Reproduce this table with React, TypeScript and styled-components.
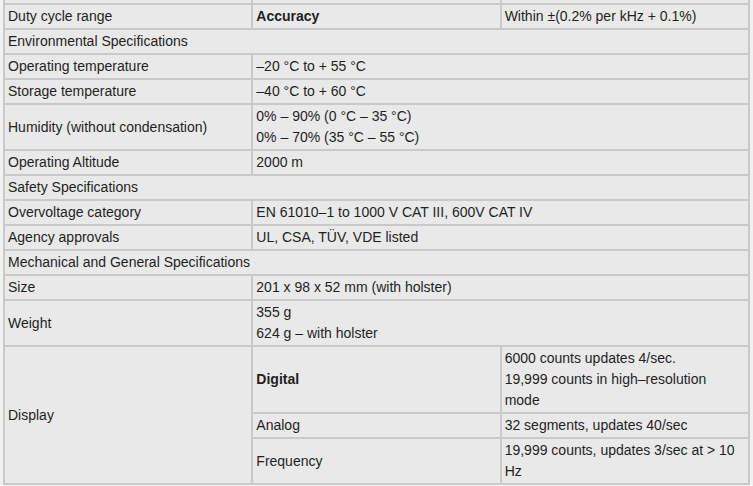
import React from "react";
import styled, { createGlobalStyle } from "styled-components";

const GlobalStyle = createGlobalStyle`
  html, body {
    margin: 0;
    padding: 0;
    background: #f1f1f1;
  }
`;

const Viewport = styled.div`
  height: 486px;
  overflow: hidden;
  padding: 0 3px;
`;

// the page is scrolled: only the bottom edge of the row above "Duty cycle range" shows
const SpecTable = styled.table`
  width: 100%;
  margin-top: -22px;
  border: 1px solid #c9c9c9;
  border-collapse: separate;
  border-spacing: 0;
  table-layout: fixed;
  font-family: "Liberation Sans", Arial, sans-serif;
  font-size: 14px;
  line-height: 21px;
  color: #1f1f1f;
`;

interface ICell {
  $bold?: boolean;
}
const Cell = styled.td<ICell>`
  border: 1px solid #c9c9c9;
  background: #e9e9e9;
  padding: 1px 3px;
  vertical-align: middle;
  font-weight: ${({ $bold }) => ($bold ? "bold" : "normal")};
`;

const Col = styled.col`
  width: 33.333%;
`;

interface ISpec {
  label: string;
  value: React.ReactNode;
}

const SpecRow: React.FC<ISpec> = ({ label, value }) => (
  <tr>
    <Cell>{label}</Cell>
    <Cell colSpan={2}>{value}</Cell>
  </tr>
);

const SectionRow: React.FC<{ title: string }> = ({ title }) => (
  <tr>
    <Cell colSpan={3}>{title}</Cell>
  </tr>
);

export default function App() {
  return (
    <>
      <GlobalStyle />
      <Viewport>
        <SpecTable>
          <colgroup>
            <Col />
            <Col />
            <Col />
          </colgroup>
          <tbody>
            <tr>
              <Cell>{"\u00a0"}</Cell>
              <Cell>{"\u00a0"}</Cell>
              <Cell>{"\u00a0"}</Cell>
            </tr>
            <tr>
              <Cell>Duty cycle range</Cell>
              <Cell $bold>Accuracy</Cell>
              <Cell>Within ±(0.2% per kHz + 0.1%)</Cell>
            </tr>
            <SectionRow title="Environmental Specifications" />
            <SpecRow label="Operating temperature" value="–20 °C to + 55 °C" />
            <SpecRow label="Storage temperature" value="–40 °C to + 60 °C" />
            <SpecRow
              label="Humidity (without condensation)"
              value={
                <>
                  0% – 90% (0 °C – 35 °C)
                  <br />
                  0% – 70% (35 °C – 55 °C)
                </>
              }
            />
            <SpecRow label="Operating Altitude" value="2000 m" />
            <SectionRow title="Safety Specifications" />
            <SpecRow label="Overvoltage category" value="EN 61010–1 to 1000 V CAT III, 600V CAT IV" />
            <SpecRow label="Agency approvals" value="UL, CSA, TÜV, VDE listed" />
            <SectionRow title="Mechanical and General Specifications" />
            <SpecRow label="Size" value="201 x 98 x 52 mm (with holster)" />
            <SpecRow
              label="Weight"
              value={
                <>
                  355 g
                  <br />
                  624 g – with holster
                </>
              }
            />
            <tr>
              <Cell rowSpan={3}>Display</Cell>
              <Cell $bold>Digital</Cell>
              <Cell>
                6000 counts updates 4/sec.
                <br />
                19,999 counts in high–resolution mode
              </Cell>
            </tr>
            <tr>
              <Cell>Analog</Cell>
              <Cell>32 segments, updates 40/sec</Cell>
            </tr>
            <tr>
              <Cell>Frequency</Cell>
              <Cell>19,999 counts, updates 3/sec at &gt; 10 Hz</Cell>
            </tr>
          </tbody>
        </SpecTable>
      </Viewport>
    </>
  );
}
